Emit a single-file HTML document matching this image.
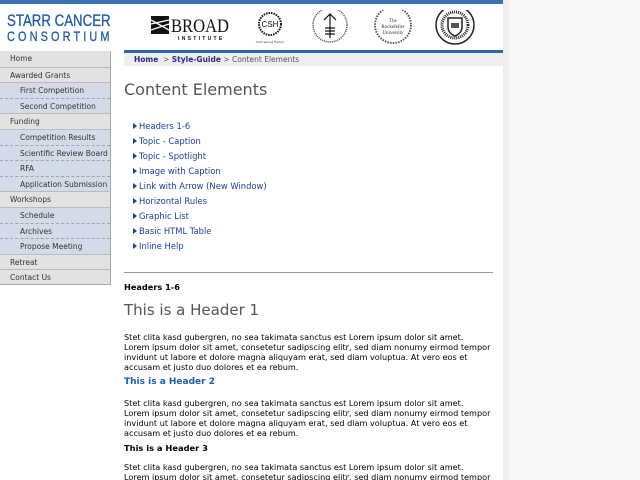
<!DOCTYPE html>
<html style="overflow:hidden"><head><meta charset="utf-8"><style>
*{margin:0;padding:0;box-sizing:border-box}
html,body{overflow:hidden}
body{width:640px;height:480px;background:#f7f7f7;font-family:"DejaVu Sans","Liberation Sans",sans-serif;font-size:9px;color:#000;position:relative}
.page{position:absolute;left:0;top:0;width:503px;height:480px;background:#fff}
.gut{position:absolute;left:503px;top:0;width:6px;height:480px;background:#eee}
.topbar{position:absolute;left:0;top:0;width:503px;height:4px;background:#3a6fb0}
.logo1{position:absolute;left:7px;top:13px;color:#1f5ba8;font-family:"Liberation Sans",sans-serif;font-size:17px;line-height:15px;transform:scaleX(0.78);transform-origin:0 0;white-space:nowrap;-webkit-text-stroke:0.3px #1f5ba8}
.logo1 .b{letter-spacing:4.0px;font-size:14px}
.bline{position:absolute;left:124px;top:50px;width:379px;height:3px;background:#2e64a8}
.crumb{position:absolute;left:124px;top:53px;width:379px;height:13px;background:#eee;font-size:7.5px;line-height:13px;padding-left:10px;color:#555}
.crumb a{color:#2a2a8a;font-weight:bold;text-decoration:none}
.nav{position:absolute;left:0;top:51px;width:111px;border-right:1px solid #aaa}
.nav div{height:15.6px;line-height:15px;font-size:7.5px;color:#333;padding-left:10px;white-space:nowrap}
.nav .t{background:#e2e2e2;border-top:1px solid #bbb}
.nav .s{background:#d3dae8;padding-left:20px;border-top:1px dashed #9aa}
.nav .t+.s{border-top:1px solid #bbb}
.nav .last{border-bottom:1px solid #aaa}
h1{position:absolute;left:124px;top:80px;font-size:16px;font-weight:normal;color:#555}
.toc{position:absolute;left:133px;top:120px;list-style:none}
.toc li{height:15px;line-height:12px;font-size:8.4px;color:#1a3f9a}
.toc li:before{content:"";display:inline-block;border-left:4px solid #1a3f9a;border-top:3px solid transparent;border-bottom:3px solid transparent;margin-right:2px;vertical-align:0}
.hr{position:absolute;left:124px;top:272px;width:369px;height:1px;background:#999}
.c{position:absolute;left:124px;width:380px;white-space:nowrap}
p{font-size:8.15px;line-height:10px}
</style></head><body>
<div class="page"></div><div class="gut"></div><div class="topbar"></div>
<div class="logo1">STARR CANCER<br><span class="b">CONSORTIUM</span></div>
<svg style="position:absolute;left:148px;top:10px" width="330" height="40">
<g fill="#111"><rect x="3" y="6" width="18" height="18"/></g>
<g stroke="#fff" stroke-width="1.3"><path d="M3 10 L21 20 M3 14 L21 10 M3 20 L21 14"/></g>
<text x="23" y="22" font-family="Liberation Serif" font-size="19" fill="#111" textLength="58" lengthAdjust="spacingAndGlyphs">BROAD</text>
<text x="30" y="30" font-family="Liberation Sans" font-size="5" letter-spacing="2.3" fill="#111" font-weight="bold">INSTITUTE</text>
<circle cx="122" cy="14" r="11" fill="none" stroke="#111" stroke-width="2" stroke-dasharray="1.5 1"/>
<text x="122" y="17" font-size="8" text-anchor="middle" font-family="Liberation Sans" fill="#111">CSH</text>
<text x="122" y="33" font-size="3" text-anchor="middle" fill="#333">Cold Spring Harbor</text>
<circle cx="182" cy="15" r="17" fill="none" stroke="#444" stroke-width="1.5" stroke-dasharray="1 1"/>
<path d="M182 4V28M176 10l6-6 6 6M177 18h10M177 21h10M177 24h10" stroke="#111" stroke-width="1.2" fill="none"/>
<circle cx="245" cy="15" r="18" fill="none" stroke="#555" stroke-width="2" stroke-dasharray="1.5 1.2"/>
<text x="245" y="12" font-size="5" text-anchor="middle" font-family="Liberation Serif" fill="#333">The</text>
<text x="245" y="18" font-size="5" text-anchor="middle" font-family="Liberation Serif" fill="#333">Rockefeller</text>
<text x="245" y="24" font-size="5" text-anchor="middle" font-family="Liberation Serif" fill="#333">University</text>
<circle cx="307" cy="15" r="19" fill="none" stroke="#222" stroke-width="1.5"/>
<circle cx="307" cy="15" r="13" fill="none" stroke="#222" stroke-width="3" stroke-dasharray="1 1"/>
<path d="M300 8h14v9q0 6-7 9q-7-3-7-9z" fill="none" stroke="#222" stroke-width="1.5"/>
<rect x="303" y="13" width="8" height="5" fill="#555"/>
</svg>
<div class="bline"></div>
<div class="crumb"><a>Home</a> &nbsp;&gt; <a>Style-Guide</a> &gt; Content Elements</div>
<div class="nav">
<div class="t" style="border-top:none">Home</div>
<div class="t">Awarded Grants</div>
<div class="s">First Competition</div>
<div class="s">Second Competition</div>
<div class="t">Funding</div>
<div class="s">Competition Results</div>
<div class="s">Scientific Review Board</div>
<div class="s">RFA</div>
<div class="s">Application Submission</div>
<div class="t">Workshops</div>
<div class="s">Schedule</div>
<div class="s">Archives</div>
<div class="s">Propose Meeting</div>
<div class="t">Retreat</div>
<div class="t last">Contact Us</div>
</div>
<h1>Content Elements</h1>
<ul class="toc">
<li>Headers 1-6</li><li>Topic - Caption</li><li>Topic - Spotlight</li><li>Image with Caption</li><li>Link with Arrow (New Window)</li><li>Horizontal Rules</li><li>Graphic List</li><li>Basic HTML Table</li><li>Inline Help</li>
</ul>
<div class="hr"></div>
<div class="c" style="top:282px;font-weight:bold;font-size:8.2px">Headers 1-6</div>
<div class="c" style="top:301px;font-size:15px;color:#555">This is a Header 1</div>
<p class="c" style="top:332px">Stet clita kasd gubergren, no sea takimata sanctus est Lorem ipsum dolor sit amet.<br>Lorem ipsum dolor sit amet, consetetur sadipscing elitr, sed diam nonumy eirmod tempor<br>invidunt ut labore et dolore magna aliquyam erat, sed diam voluptua. At vero eos et<br>accusam et justo duo dolores et ea rebum.</p>
<div class="c" style="top:377px;font-size:9px;font-weight:bold;color:#1f5ba8">This is a Header 2</div>
<p class="c" style="top:398px">Stet clita kasd gubergren, no sea takimata sanctus est Lorem ipsum dolor sit amet.<br>Lorem ipsum dolor sit amet, consetetur sadipscing elitr, sed diam nonumy eirmod tempor<br>invidunt ut labore et dolore magna aliquyam erat, sed diam voluptua. At vero eos et<br>accusam et justo duo dolores et ea rebum.</p>
<div class="c" style="top:443px;font-size:8.3px;font-weight:bold">This is a Header 3</div>
<p class="c" style="top:462px">Stet clita kasd gubergren, no sea takimata sanctus est Lorem ipsum dolor sit amet.<br>Lorem ipsum dolor sit amet, consetetur sadipscing elitr, sed diam nonumy eirmod tempor</p>
</body></html>
